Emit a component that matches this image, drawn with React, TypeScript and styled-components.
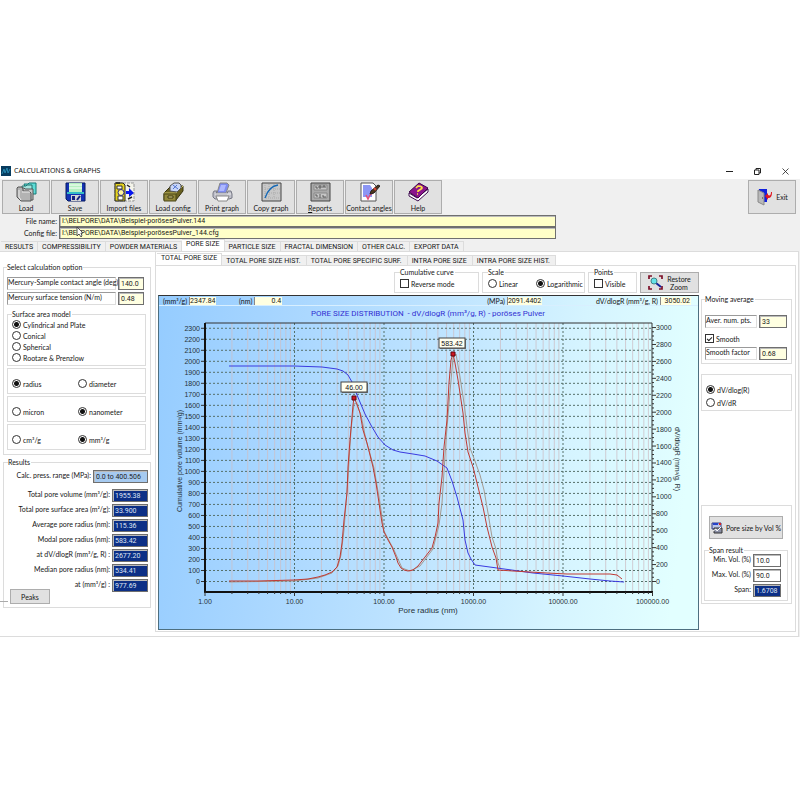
import React from "react";
import styled, { createGlobalStyle, css } from "styled-components";

const Global = createGlobalStyle`
  *, *::before, *::after { box-sizing: border-box; }
  body { margin: 0; background: #fff; }
  button, input { font: inherit; color: inherit; margin: 0; }
`;

const Page = styled.main`
  padding: 163px 0 20px;
  font: 7px/8px Lato, "Liberation Sans", sans-serif;
  color: #161616;
`;
const Window = styled.div`
  background: #f0f0f0;
`;
const TitleBar = styled.header`
  display: flex;
  align-items: center;
  height: 16px;
  padding: 0 10px 0 1px;
  gap: 3px;
  background: #fff;
`;
const Title = styled.h1`
  margin: 0;
  flex: 1;
  font: 400 7px/10px "Noto Sans", "Open Sans", sans-serif;
`;
const Caption = styled.button`
  display: flex;
  align-items: center;
  justify-content: center;
  width: 10px;
  height: 12px;
  margin-left: 15px;
  padding: 0;
  border: 0;
  background: none;
`;

const Toolbar = styled.div`
  display: flex;
  gap: 1px;
  padding: 1px 4px 0 2px;
`;
const Face = styled.button`
  display: flex;
  align-items: center;
  justify-content: center;
  background: #e1e1e1;
  border: 1px solid #adadad;
  padding: 0;
`;
const Tool = styled(Face)<{ $row?: boolean }>`
  flex-direction: ${(p) => (p.$row ? "row" : "column")};
  justify-content: ${(p) => (p.$row ? "center" : "flex-start")};
  gap: ${(p) => (p.$row ? "3px" : "2px")};
  width: 48px;
  height: 34px;
  padding-top: ${(p) => (p.$row ? "0" : "1px")};
  margin-left: ${(p) => (p.$row ? "auto" : "0")};
  white-space: nowrap;
`;

const Files = styled.div`
  position: relative;
  display: grid;
  grid-template-columns: 57px minmax(100px, 497px);
  column-gap: 2px;
  padding-top: 1px;
`;
const FileLabel = styled.label`
  text-align: right;
  line-height: 12px;
`;
const fieldBox = css`
  border: 1px solid #6f6f6f;
  box-shadow: inset 1px 1px 0 #bbb;
  padding: 0 2px;
  min-width: 0;
  width: 100%;
  border-radius: 0;
  outline: 0;
  font-family: Roboto, "Liberation Sans", sans-serif;
`;
const PathInput = styled.input`
  ${fieldBox}
  height: 12px;
  background: #ffffc8;
`;
const Pointer = styled.svg`
  position: absolute;
  left: 76px;
  top: 12px;
`;

const TabList = styled.div<{ $sub?: boolean }>`
  display: flex;
  align-items: flex-end;
  height: ${(p) => (p.$sub ? "13px" : "12px")};
  padding-left: 1px;
  background: ${(p) => (p.$sub ? "#fff" : "#f0f0f0")};
`;
const Tab = styled.button<{ $active?: boolean; $sub?: boolean }>`
  height: ${(p) => (p.$active ? "12px" : "10px")};
  padding: ${(p) => (p.$active ? "0 4px 3px" : p.$sub ? "0 5px 0 4px" : "0 4px")};
  font-family: Roboto, "Liberation Sans", sans-serif;
  line-height: 8px;
  border: 1px solid #dcdcdc;
  border-left-width: 0;
  border-bottom: 0;
  background: ${(p) => (p.$active ? "#fff" : "#f0f0f0")};
  white-space: nowrap;
`;
const MainPanel = styled.section`
  display: grid;
  grid-template-columns: 152px minmax(0, 1fr);
  gap: 3px;
  margin-right: 1px;
  padding: 0 2px 4px 0;
  background: #fff;
  border: 1px solid #dcdcdc;
  border-left-width: 0;
`;

const Group = styled.fieldset`
  min-width: 0;
  margin: 0;
  padding: 0 4px 4px 3px;
  border: 1px solid #dcdcdc;
`;
const Legend = styled.legend`
  padding: 0 1px 0 0;
  margin: 0;
  line-height: 8px;
`;
const LeftCol = styled.div`
  display: flex;
  flex-direction: column;
  gap: 3px;
  padding: 11px 1px 0 3px;
`;
const Options = styled(Group)`
  display: flex;
  flex-direction: column;
  gap: 2px;
`;
const ParamRow = styled.div<{ $w: number; $top?: number; $right?: number }>`
  display: grid;
  grid-template-columns: minmax(0, 1fr) ${(p) => p.$w}px;
  gap: 2px;
  margin: ${(p) => p.$top || 0}px ${(p) => p.$right || 0}px 0 0;
`;
const ParamLabel = styled.label`
  height: 13px;
  border: 1px solid #9a9a9a;
  border-right-color: #ddd;
  border-bottom-color: #ddd;
  line-height: 9px;
  white-space: nowrap;
`;
const Field = styled.input<{ $tone?: "cream" | "navy" | "blue" | "plain" }>`
  ${fieldBox}
  height: 13px;
  background: ${(p) =>
    ({ cream: "#ffffe1", navy: "#0c2f86", blue: "#a6caf0", plain: "#fff" })[p.$tone || "cream"]};
  color: ${(p) => (p.$tone === "navy" ? "#dfe4f4" : "#222")};
`;
const RadioStack = styled(Group)`
  display: flex;
  flex-direction: column;
  gap: 2px;
  margin-top: 3px;
  padding: 2px 4px 3px 4px;
`;
const RadioPair = styled(Group)`
  display: grid;
  grid-template-columns: 66px 1fr;
  height: 26px;
  padding: 10px 4px 0;
`;
const Choice = styled.label`
  display: flex;
  align-items: center;
  gap: 2px;
  height: 9px;
  white-space: nowrap;
`;
const Radio = styled.input`
  appearance: none;
  flex: none;
  width: 9px;
  height: 9px;
  border: 1px solid #333;
  border-radius: 50%;
  background: #fff;
  &:checked { background: radial-gradient(circle, #111 0 2px, #fff 3px); }
`;
const CheckBox = styled.input`
  appearance: none;
  flex: none;
  width: 9px;
  height: 9px;
  border: 1px solid #333;
  background: #fff;
  display: grid;
  place-items: center;
  &:checked::before {
    content: "";
    width: 5px;
    height: 3px;
    border: solid #222;
    border-width: 0 0 1px 1px;
    rotate: -45deg;
    margin-bottom: 1px;
  }
`;

const Results = styled(Group)`
  position: relative;
  padding: 4px 2px 3px 4px;
`;
const EdgeMark = styled.span`
  position: absolute;
  left: -4px;
  bottom: 5px;
  width: 8px;
  border-top: 1px solid #aaa;
`;
const ResultRow = styled.div<{ $w: number; $after?: number }>`
  display: grid;
  grid-template-columns: minmax(0, 1fr) ${(p) => p.$w}px;
  column-gap: 2px;
  margin-bottom: ${(p) => (p.$after === undefined ? 2 : p.$after)}px;
  label { text-align: right; line-height: 11px; white-space: nowrap; }
`;
const SmallButton = styled(Face)`
  width: 40px;
  height: 15px;
  margin: -5px 0 0 2px;
`;

const SubPanel = styled.div`
  min-width: 0;
  border-left: 1px solid #dcdcdc;
`;
const SubBody = styled.div`
  display: grid;
  grid-template-columns: minmax(0, 1fr) 94px;
  gap: 2px;
  border: 1px solid #dcdcdc;
  border-left: 0;
  padding: 1px 0 1px 2px;
`;
const OptionBar = styled.div`
  display: flex;
  justify-content: flex-end;
  align-items: flex-end;
  gap: 3px;
  height: 26px;
  margin-bottom: 2px;
`;
const OptionGroup = styled(Group)<{ $w: number; $cols?: number }>`
  width: ${(p) => p.$w}px;
  height: 25px;
  display: grid;
  grid-template-columns: ${(p) => (p.$cols ? `${p.$cols}px 1fr` : "1fr")};
  padding: 3px 0 0 5px;
`;
const ZoomButton = styled(Face)`
  width: 59px;
  height: 21px;
  gap: 4px;
`;
const GraphFrame = styled.div`
  border: 1px solid #4d6f80;
  border-top-color: #333;
  background: linear-gradient(97deg, #95ccff 0%, #a8d6ff 22%, #bfe4ff 50%, #d5f4ff 74%, #e2ffff 95%);
`;
const Readouts = styled.div`
  display: flex;
  align-items: center;
  height: 10px;
  padding: 0 7px 0 4px;
  border-bottom: 1px solid #d8efff;
`;
const Readout = styled.span<{ $w: number; $before?: number; $auto?: boolean }>`
  display: flex;
  gap: 2px;
  margin-left: ${(p) => (p.$auto ? "auto" : `${p.$before || 0}px`)};
  output {
    width: ${(p) => p.$w}px;
    font-family: Roboto, "Liberation Sans", sans-serif;
    background: #ffffe1;
    border-left: 1px solid #888;
    text-align: right;
    padding-right: 1px;
  }
`;
const Graph = styled.svg`
  display: block;
  width: 100%;
  height: auto;
  font: 7px "Liberation Sans", Arial, sans-serif;
`;

const RightCol = styled.div`
  display: flex;
  flex-direction: column;
  padding: 28px 3px 26px 0;
`;
const Moving = styled(Group)`
  padding: 12px 4px 3px 3px;
`;
const SmoothRow = styled.div`
  margin: 6px 0 4px;
`;
const Derivative = styled(RadioStack)`
  gap: 4px;
  margin-top: 10px;
  padding: 10px 4px 3px;
`;
const SpanArea = styled(Group)`
  margin-top: auto;
  padding: 10px 3px 2px 2px;
`;
const VolumeButton = styled(Face)`
  width: 74px;
  height: 23px;
  gap: 3px;
  margin: 0 0 7px 5px;
  white-space: nowrap;
`;
const SpanGroup = styled(Group)`
  padding: 0 6px 1px 4px;
`;

type IconProps = { children: React.ReactNode; w?: number; h?: number; box?: string };
const Icon = ({ children, w = 21, h = 20, box = "0 0 21 20" }: IconProps) => (
  <svg width={w} height={h} viewBox={box} aria-hidden="true">{children}</svg>
);

const LoadIcon = (
  <Icon>
    <path d="M8 2h4l1-1h7v11h-9z" fill="#5fdcd6" stroke="#167b78" />
    <path d="M6 4h4l1-1h5v11H7z" fill="#a5e5df" stroke="#23706d" />
    <path d="M4 7V6h4l1 1h8v11H6z" fill="#c5c5c5" stroke="#555" />
    <path d="M1 6l1-1h4l1 2v2h6l2 2v8H5l-4-4z" fill="#b3b3b3" stroke="#555" />
    <path d="M3 8v7l2 3M6 10h8" fill="none" stroke="#eee" />
  </Icon>
);
const SaveIcon = (
  <Icon>
    <path d="M1 1h19v18H3l-2-2z" fill="#1432b4" stroke="#071b60" />
    <path d="M4 1h13v9H4z" fill="#b4f0c0" />
    <path d="M4 3h13M4 6h13" stroke="#fff" />
    <path d="M2 10h17v2H2z" fill="#35bcc6" />
    <path d="M6 13h10v6H6z" fill="#d5d5d5" />
    <path d="M7 14h3v4H7z" fill="#152080" />
    <path d="M12 18l3-4" stroke="#152080" strokeWidth="2" />
  </Icon>
);
const ImportIcon = (
  <Icon>
    <path d="M1 1h19v18H1z" fill="#f4f4ea" stroke="#999" strokeDasharray="3 1" />
    <path d="M1 1h8l2 2v16H1z" fill="#e4d21e" stroke="#222" />
    <path d="M3 4h5v3H3zM4 14h5v4H4z" fill="#fff" stroke="#333" />
    <circle cx="7" cy="10.500" r="3" fill="#fff69a" stroke="#28288c" />
    <path d="M2 1h4M13 3l3 2m-2 12l4-2" stroke="#222" strokeWidth="1.5" />
    <path d="M12 9h3V6l5 5-5 4v-3h-3z" fill="#0716ed" />
  </Icon>
);
const ConfigIcon = (
  <Icon>
    <path d="M1 11L8 4h12v5l-7 9H1z" fill="#686020" stroke="#37330e" />
    <path d="M1 11h12l7-7" fill="none" stroke="#d4c96a" />
    <path d="M7 9V4l4-3h5l2 2v3l-4 4z" fill="#c9d6f8" stroke="#555" />
    <path d="M10 3l5 4m-5 0l4-4" stroke="#5174d1" />
    <path d="M1 12h12v7H1z" fill="#91873a" stroke="#4b4617" />
    <path d="M5 14h5v2H5z" fill="#e8df96" stroke="#3a3610" />
  </Icon>
);
const PrintIcon = (
  <Icon>
    <path d="M8 1h7l2 2-3 8H5z" fill="#7f8df0" stroke="#888" />
    <path d="M9 3h5l-2 6H7z" fill="#aeb8ff" />
    <path d="M2 9h3l-1 3h11l1-3h3l1 3v4l-3 1H3l-2-2v-4z" fill="#bfc0ca" stroke="#777985" />
    <path d="M4 14h13l-2 5H6z" fill="#fff" stroke="#888" />
    <path d="M3 12h16" stroke="#eee" />
  </Icon>
);
const CopyIcon = (
  <Icon>
    <path d="M1 1h19v18H1z" fill="#c8c8c8" stroke="#444" />
    <path d="M4 3v13h15M4 7h15M4 11h15M8 2v14M13 2v14" fill="none" stroke="#aaa" strokeDasharray="1 1" />
    <path d="M4 16C6 10 9 4 17 3" fill="none" stroke="#1769b5" strokeWidth="1.3" />
  </Icon>
);
const ReportIcon = (
  <Icon>
    <path d="M1 1h19v18H1z" fill="#aaa" stroke="#444" />
    <path d="M4 3h13v5H4zM4 11h13v5H4z" fill="#c6c6c6" stroke="#888" />
    <path d="M6 4v2h2m1-2h2v2H9zm4 2V4h2v2M5 13h2v2m2-2h2m-2 2h2m2-2v2h3" fill="none" stroke="#444" strokeWidth=".8" />
  </Icon>
);
const AngleIcon = (
  <Icon>
    <path d="M2 1h12l3 3v15H2z" fill="#fff" stroke="#555" />
    <path d="M4 3h7l2 3v9H4z" fill="#8c96f4" />
    <path d="M7 13l2 4 2-4 3-2" fill="none" stroke="#e64f79" strokeWidth="1.5" />
    <path d="M11 12l1-3 7-6 2 1-6 7z" fill="#50371c" stroke="#222" />
    <path d="M15 6l2 2" stroke="#d43" strokeWidth="2" />
  </Icon>
);
const HelpIcon = (
  <Icon>
    <path d="M1 11l8 5 11-9v3l-10 9-9-5z" fill="#fff" stroke="#3e0c51" />
    <path d="M1 10L11 1l9 5-10 10z" fill="#8b168c" stroke="#40054a" />
    <path d="M8 6l2-2c4 0 5 2 3 3l-3 2v1m-1 2h1" fill="none" stroke="#ffe344" strokeWidth="1.7" />
  </Icon>
);
const ExitIcon = (
  <Icon w={17} h={18} box="0 0 17 18">
    <path d="M3 1h8v13H3z" fill="#1120dd" />
    <path d="M2 2l6 3v12l-6-3z" fill="#b9b9b9" stroke="#888" />
    <path d="M6 10h1" stroke="#333" />
    <path d="M9 8l3-3v2c2 1 3 0 3-3h1c0 4-1 6-4 6v2z" fill="#e01822" />
  </Icon>
);
const RestoreIcon = (
  <Icon w={15} h={15} box="0 0 15 15">
    <path d="M1 4V1h3m7 0h3v3M1 11v3h3m7 0h3v-3" fill="none" stroke="#7d1028" strokeWidth="1.7" />
    <path d="M8 8l5 4" stroke="#14229b" strokeWidth="2" />
    <circle cx="6" cy="6" r="3" fill="#67e4e8" stroke="#428288" />
  </Icon>
);
const VolumeIcon = (
  <Icon w={12} h={12} box="0 0 12 12">
    <path d="M1 1h9v6H1z" fill="#b9c4e8" stroke="#303d87" />
    <path d="M2 2h5" stroke="#2743ca" strokeWidth="2" />
    <path d="M8 2h2" stroke="#d22" strokeWidth="2" />
    <path d="M3 6h8v5H3z" fill="#8a8fa5" stroke="#333" />
    <path d="M2 9l3-2 1 2 4-4" fill="none" stroke="#fff" />
  </Icon>
);

const tools: [string, React.ReactNode][] = [
  ["Load", LoadIcon], ["Save", SaveIcon], ["Import files", ImportIcon],
  ["Load config", ConfigIcon], ["Print graph", PrintIcon], ["Copy graph", CopyIcon],
  ["Reports", ReportIcon], ["Contact angles", AngleIcon], ["Help", HelpIcon],
];
const tabs = ["RESULTS", "COMPRESSIBILITY", "POWDER MATERIALS", "PORE SIZE", "PARTICLE SIZE", "FRACTAL DIMENSION", "OTHER CALC.", "EXPORT DATA"];
const subTabs = ["TOTAL PORE SIZE", "TOTAL PORE SIZE HIST.", "TOTAL PORE SPECIFIC SURF.", "INTRA PORE SIZE", "INTRA PORE SIZE HIST."];
const results = [
  ["Total pore volume (mm³/g):", "1955.38"],
  ["Total pore surface area (m²/g):", "33.900"],
  ["Average pore radius (nm):", "115.36"],
  ["Modal pore radius (nm):", "583.42"],
  ["at dV/dlogR (mm³/g, R) :", "2677.20"],
  ["Median pore radius (nm):", "534.41"],
  ["at (mm³/g) :", "977.69"],
];

const RadioOption = ({ name, label, on }: { name: string; label: string; on?: boolean }) => (
  <Choice><Radio type="radio" name={name} defaultChecked={on} />{label}</Choice>
);

const left = 205, decade = 89.5, top = 323, bottom = 592, zero = 581.5;
const decades = [0, 1, 2, 3, 4, 5];
const minors = decades.slice(0, 5).flatMap((d) =>
  [2, 3, 4, 5, 6, 7, 8, 9].map((n) => left + (d + Math.log10(n)) * decade));
const volumes = Array.from({ length: 24 }, (_, i) => i * 100);
const slopes = Array.from({ length: 16 }, (_, i) => i * 200);
const volumeY = (v: number) => zero - v * 0.1101;
const slopeY = (v: number) => zero - v * 0.08465;

const cumulative = "229,366 294,366 322,367 337,369 343,371 348,375 352,382 357,395 365,414 372,427 378,437 385,445 393,450 400,452 413,454 425,456 437,461 447,468 452,481 457,497 463,520 465,540 468,553 471,559 475,565 497,568 533,573 563,576 590,579 610,581 624,582";
const smoothed = "229,581 258,581 294,580 308,579 318,577 325,575 332,572 337,567 340,557 342,543 344,520 347,493 348,467 350,440 352,417 353,405 354,398 357,404 360,413 363,430 367,443 370,455 373,467 376,483 379,503 382,523 384,532 388,540 392,547 396,557 398,563 401,568 404,570 408,571 413,570 418,566 425,557 432,548 435,537 438,523 439,503 442,477 444,447 447,420 449,383 451,360 453,354 455,363 458,380 463,413 465,433 468,452 473,467 478,487 483,507 487,527 492,547 496,558 498,570 513,571 547,573 567,574 610,574 617,575 622,579";
const raw = "229,582 294,581 318,578 332,573 338,566 341,555 344,530 348,478 351,430 354,404 356,403 361,415 366,440 374,468 380,503 384,531 394,550 402,568 410,571 420,566 433,549 439,525 442,503 446,440 450,392 453,358 456,354 460,377 464,403 467,427 470,448 475,461 480,475 484,490 488,513 492,537 496,549 498,563 500,568";

const Chart = () => (
  <Graph viewBox="159 306 539 323" role="img" aria-label="Pore size distribution">
    <text x="428" y="316" fontSize="8" fontFamily="Roboto" fill="#3230d2" textAnchor="middle" xmlSpace="preserve">
      PORE SIZE DISTRIBUTION  - dV/dlogR (mm³/g, R) - poröses Pulver
    </text>
    <g stroke="#cdbfc6" strokeWidth="1" opacity="0.75">
      {minors.map((x) => <line key={x} x1={x} x2={x} y1={top} y2={bottom} />)}
    </g>
    <g stroke="#56706a" strokeWidth="1" strokeDasharray="2 2">
      {volumes.map((v) => <line key={v} x1={left} x2="652" y1={volumeY(v)} y2={volumeY(v)} />)}
      {decades.slice(1, 5).map((d) => (
        <line key={d} x1={left + d * decade} x2={left + d * decade} y1={top} y2={bottom} />
      ))}
    </g>
    <path d="M205 323H652V592" fill="none" stroke="#333" strokeWidth="1" />
    <path d="M205 323V592H653" fill="none" stroke="#111" strokeWidth="2" />
    <g stroke="#333" strokeWidth="1">
      {volumes.map((v) => <line key={v} x1="201" x2="204" y1={volumeY(v)} y2={volumeY(v)} />)}
      {slopes.map((v) => <line key={v} x1="652" x2="656" y1={slopeY(v)} y2={slopeY(v)} />)}
      {slopes.slice(1).flatMap((v) => [50, 100, 150].map((d) => (
        <line key={v - d} x1="652" x2="654" y1={slopeY(v - d)} y2={slopeY(v - d)} />
      )))}
      {decades.map((d) => <line key={d} x1={left + d * decade} x2={left + d * decade} y1="592" y2="596" />)}
      {minors.map((x) => <line key={x} x1={x} x2={x} y1="592" y2="594" />)}
    </g>
    <g fill="#263238">
      {volumes.map((v) => <text key={v} x="200" y={volumeY(v) + 2.5} textAnchor="end">{v}</text>)}
      {slopes.map((v) => <text key={v} x="656" y={slopeY(v) + 2.5}>{v}</text>)}
      {decades.map((d) => (
        <text key={d} x={left + d * decade} y="604" textAnchor="middle">{(10 ** d).toFixed(2)}</text>
      ))}
      <text x="428" y="613" textAnchor="middle" fontSize="8">Pore radius (nm)</text>
      <text transform="translate(182 461) rotate(-90)" textAnchor="middle">Cumulative pore volume (mm³/g)</text>
      <text transform="translate(675 459) rotate(90)" textAnchor="middle">dV/dlogR (mm³/g, R)</text>
    </g>
    <g fill="none" strokeWidth="1">
      <polyline points={raw} stroke="#a59a90" />
      <polyline points={cumulative} stroke="#3a3ae0" />
      <polyline points={smoothed} stroke="#c03a34" />
    </g>
    <path d="M352 396h4v4h-4zM451 352h4v4h-4z" fill="#d21420" stroke="#5c0810" />
    {[["46.00", 354, 387], ["583.42", 452, 343]].map(([t, x, y]) => (
      <g key={t}>
        <rect x={Number(x) - 12} y={Number(y) - 4} width="26" height="10" fill="#777" />
        <rect x={Number(x) - 13} y={Number(y) - 5} width="26" height="10" fill="#fffff0" stroke="#444" />
        <text x={x} y={Number(y) + 3} textAnchor="middle" fill="#111">{t}</text>
      </g>
    ))}
  </Graph>
);

export default function App() {
  return (
    <Page>
      <Global />
      <Window>
        <TitleBar>
          <Icon w={10} h={10} box="0 0 10 10">
            <path d="M0 0h10v10H0z" fill="#073b5e" />
            <path d="M1 8l2-5 1 4 2-5 1 5 2-4" fill="none" stroke="#2689b0" />
          </Icon>
          <Title>CALCULATIONS &amp; GRAPHS</Title>
          <Caption aria-label="Minimize"><Icon w={7} h={7} box="0 0 7 7"><path d="M0 3.500h7" stroke="#222" /></Icon></Caption>
          <Caption aria-label="Restore"><Icon w={7} h={7} box="0 0 7 7"><path d="M.5 2h4.500v4.500H.5zM2 2V.5h4.500V5H5" fill="none" stroke="#222" /></Icon></Caption>
          <Caption aria-label="Close"><Icon w={7} h={7} box="0 0 7 7"><path d="M.5.5l6 6m0-6l-6 6" stroke="#222" strokeWidth=".8" /></Icon></Caption>
        </TitleBar>
        <Toolbar>
          {tools.map(([name, icon]) => (
            <Tool key={name}>{icon}<span>{name === "Reports" ? <><u>R</u>eports</> : name}</span></Tool>
          ))}
          <Tool $row>{ExitIcon}<span>Exit</span></Tool>
        </Toolbar>
        <Files>
          <FileLabel htmlFor="file">File name:</FileLabel>
          <PathInput id="file" defaultValue="I:\BELPORE\DATA\Beispiel-porösesPulver.144" />
          <FileLabel htmlFor="config">Config file:</FileLabel>
          <PathInput id="config" defaultValue="I:\BELPORE\DATA\Beispiel-porösesPulver_144.cfg" />
          <Pointer width="8" height="12" viewBox="0 0 8 12" aria-hidden="true">
            <path d="M1 1v9l2-2 2 3 1-1-1-3h2z" fill="#fff" stroke="#333" strokeWidth=".8" />
          </Pointer>
        </Files>
        <TabList role="tablist">
          {tabs.map((t) => (
            <Tab key={t} role="tab" aria-selected={t === "PORE SIZE"} $active={t === "PORE SIZE"}>{t}</Tab>
          ))}
        </TabList>
        <MainPanel>
          <LeftCol>
            <Options>
              <Legend>Select calculation option</Legend>
              <ParamRow $w={26} $top={6} $right={2}>
                <ParamLabel htmlFor="angle">Mercury-Sample contact angle (deg)</ParamLabel>
                <Field id="angle" defaultValue="140.0" />
              </ParamRow>
              <ParamRow $w={26} $right={2}>
                <ParamLabel htmlFor="tension">Mercury surface tension (N/m)</ParamLabel>
                <Field id="tension" defaultValue="0.48" />
              </ParamRow>
              <RadioStack>
                <Legend>Surface area model</Legend>
                <RadioOption name="model" label="Cylindrical and Plate" on />
                <RadioOption name="model" label="Conical" />
                <RadioOption name="model" label="Spherical" />
                <RadioOption name="model" label="Rootare & Prenzlow" />
              </RadioStack>
              <RadioPair>
                <RadioOption name="dim" label="radius" on />
                <RadioOption name="dim" label="diameter" />
              </RadioPair>
              <RadioPair>
                <RadioOption name="unit" label="micron" />
                <RadioOption name="unit" label="nanometer" on />
              </RadioPair>
              <RadioPair>
                <RadioOption name="vol" label="cm³/g" />
                <RadioOption name="vol" label="mm³/g" on />
              </RadioPair>
            </Options>
            <Results>
              <Legend>Results</Legend>
              <ResultRow $w={55} $after={6}>
                <label htmlFor="range">Calc. press. range (MPa):</label>
                <Field id="range" $tone="blue" readOnly value="0.0 to 400.506" />
              </ResultRow>
              {results.map(([label, value], i) => (
                <ResultRow key={label} $w={36}>
                  <label htmlFor={`res${i}`}>{label}</label>
                  <Field id={`res${i}`} $tone="navy" readOnly value={value} />
                </ResultRow>
              ))}
              <SmallButton>Peaks</SmallButton>
              <EdgeMark />
            </Results>
          </LeftCol>
          <SubPanel>
            <TabList $sub role="tablist">
              {subTabs.map((t, i) => (
                <Tab key={t} role="tab" aria-selected={i === 0} $active={i === 0} $sub>{t}</Tab>
              ))}
            </TabList>
            <SubBody>
              <div>
                <OptionBar>
                  <OptionGroup $w={85}>
                    <Legend>Cumulative curve</Legend>
                    <Choice><CheckBox type="checkbox" />Reverse mode</Choice>
                  </OptionGroup>
                  <OptionGroup $w={103} $cols={48}>
                    <Legend>Scale</Legend>
                    <RadioOption name="scale" label="Linear" />
                    <RadioOption name="scale" label="Logarithmic" on />
                  </OptionGroup>
                  <OptionGroup $w={49}>
                    <Legend>Points</Legend>
                    <Choice><CheckBox type="checkbox" />Visible</Choice>
                  </OptionGroup>
                  <ZoomButton>{RestoreIcon}<span>Restore<br />Zoom</span></ZoomButton>
                </OptionBar>
                <GraphFrame>
                  <Readouts>
                    <Readout $w={27}>(mm³/g)<output>2347.84</output></Readout>
                    <Readout $w={28} $before={23}>(nm)<output>0.4</output></Readout>
                    <Readout $w={35} $auto>(MPa)<output>2091.4402</output></Readout>
                    <Readout $w={31} $before={54}>dV/dlogR (mm³/g, R)<output>3050.02</output></Readout>
                  </Readouts>
                  <Chart />
                </GraphFrame>
              </div>
              <RightCol>
                <Moving>
                  <Legend>Moving average</Legend>
                  <ParamRow $w={28}>
                    <ParamLabel htmlFor="pts">Aver. num. pts.</ParamLabel>
                    <Field id="pts" defaultValue="33" />
                  </ParamRow>
                  <SmoothRow><Choice><CheckBox type="checkbox" defaultChecked />Smooth</Choice></SmoothRow>
                  <ParamRow $w={28}>
                    <ParamLabel htmlFor="factor">Smooth factor</ParamLabel>
                    <Field id="factor" defaultValue="0.68" />
                  </ParamRow>
                </Moving>
                <Derivative>
                  <RadioOption name="deriv" label="dV/dlog(R)" on />
                  <RadioOption name="deriv" label="dV/dR" />
                </Derivative>
                <SpanArea>
                  <VolumeButton>{VolumeIcon}Pore size by Vol %</VolumeButton>
                  <SpanGroup>
                    <Legend>Span result</Legend>
                    <ResultRow $w={28}>
                      <label htmlFor="min">Min. Vol. (%)</label>
                      <Field id="min" $tone="plain" defaultValue="10.0" />
                    </ResultRow>
                    <ResultRow $w={28}>
                      <label htmlFor="max">Max. Vol. (%)</label>
                      <Field id="max" $tone="plain" defaultValue="90.0" />
                    </ResultRow>
                    <ResultRow $w={28}>
                      <label htmlFor="span">Span:</label>
                      <Field id="span" $tone="navy" readOnly value="1.6708" />
                    </ResultRow>
                  </SpanGroup>
                </SpanArea>
              </RightCol>
            </SubBody>
          </SubPanel>
        </MainPanel>
      </Window>
    </Page>
  );
}
